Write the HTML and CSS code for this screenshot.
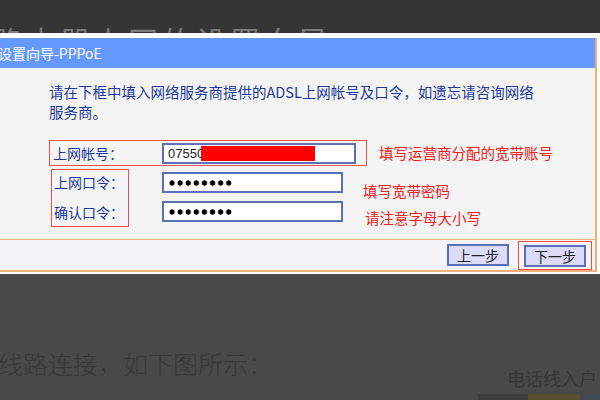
FILE: index.html
```html
<!DOCTYPE html>
<html lang="zh-CN">
<head>
    <meta charset="UTF-8">
    <title>设置向导-PPPoE</title>
    <link rel="stylesheet" href="styles.css">
</head>
<body>
<div class="page">
    <div class="heading">
        <h2>路由器上网的设置向导</h2>
    </div>

    <div class="shot">
        <div class="win">
            <div class="win__title">设置向导-PPPoE</div>

            <div class="win__body">
                <p class="intro">请在下框中填入网络服务商提供的ADSL上网帐号及口令，如遗忘请咨询网络服务商。</p>

                <div class="row">
                    <div class="mark mark--account">
                        <span class="label">上网帐号：</span>
                        <span class="field field--wide">07550<span class="redact"></span></span>
                    </div>
                    <span class="note note--first">填写运营商分配的宽带账号</span>
                </div>

                <div class="row row--group">
                    <div class="mark mark--labels">
                        <span class="label">上网口令：</span>
                        <span class="label">确认口令：</span>
                    </div>
                    <div class="fields">
                        <div class="fields__line">
                            <span class="field"><span class="dots"></span></span>
                            <span class="note note--second">填写宽带密码</span>
                        </div>
                        <div class="fields__line">
                            <span class="field"><span class="dots"></span></span>
                            <span class="note note--third">请注意字母大小写</span>
                        </div>
                    </div>
                </div>
            </div>

            <div class="win__foot">
                <button class="btn">上一步</button>
                <div class="mark mark--btn">
                    <button class="btn">下一步</button>
                </div>
            </div>
        </div>
    </div>

    <div class="lower">
        <p class="lower__text">线路连接，如下图所示：</p>
        <div class="lower__figure">
            <span class="lower__caption">电话线入户</span>
            <div class="lower__bar">
                <span class="seg seg--grey"></span>
                <span class="seg seg--yellow"></span>
                <span class="seg seg--blue"></span>
            </div>
        </div>
    </div>
</div>
</body>
</html>
```

FILE: styles.css
```css
body {
  margin: 0;
  background: #494949;
  font-family: "Noto Sans CJK SC", "Noto Sans", sans-serif;
}

.page {
  width: 600px;
  height: 400px;
  overflow: hidden;
}

/* page heading, mostly hidden under the screenshot */
.heading {
  height: 33px;
  background: #353535;
  overflow: hidden;
}

.heading h2 {
  margin: 25px 0 0 -8px;
  font-size: 30px;
  font-weight: 400;
  line-height: 30px;
  letter-spacing: 4px;
  color: #7a7a7a;
  white-space: nowrap;
}

/* the router screenshot */
.shot {
  background: #fff;
  padding: 5px 3px 2px 0;
}

.win {
  border-right: 2px solid #f2ad6a;
  border-bottom: 2px solid #f0b27a;
}

.win__title {
  height: 30px;
  line-height: 30px;
  background: #6699ff;
  color: #fff;
  font-size: 14px;
  text-indent: -2px;
}

.win__body {
  height: 172px;
  background: #f4f4f4;
  border-bottom: 1px solid #f3b47a;
  padding-top: 14px;
  box-sizing: border-box;
}

.intro {
  margin: 0 0 18px 49px;
  width: 490px;
  font-size: 14.5px;
  line-height: 20px;
  color: #1d3a9a;
}

.row {
  display: flex;
  align-items: center;
}

.mark {
  border: 1px solid #e85050;
  box-sizing: border-box;
}

.mark--account {
  display: flex;
  align-items: center;
  margin-left: 49px;
  width: 318px;
  height: 26px;
  padding-left: 3px;
}

.label {
  font-size: 14px;
  color: #1d3a9a;
  line-height: 22px;
}

.mark--account .label {
  width: 109px;
}

.field {
  display: flex;
  align-items: center;
  width: 181px;
  height: 21px;
  box-sizing: border-box;
  background: #fff;
  border: 2px solid #5b6fb8;
  padding-left: 4px;
}

.field--wide {
  width: 194px;
  font-family: "Liberation Sans", sans-serif;
  font-size: 13px;
  color: #222;
}

.redact {
  display: inline-block;
  width: 114px;
  height: 15px;
  background: #ff0000;
  margin-left: -3px;
}

.dots {
  display: inline-block;
  width: 65px;
  height: 6px;
  background: radial-gradient(circle, #000 2.4px, transparent 2.9px) 0 0 / 8.1px 6px repeat-x;
}

.note {
  font-size: 14.5px;
  color: #ee2020;
  line-height: 20px;
}

.note--first {
  margin-left: 12px;
}

.note--second {
  margin: 9px 0 0 20px;
}

.note--third {
  margin: 7px 0 0 22px;
}

.row--group {
  align-items: flex-start;
  margin-top: 3px;
}

.mark--labels {
  display: flex;
  flex-direction: column;
  gap: 8px;
  margin-left: 51px;
  width: 78px;
  height: 58px;
  padding: 1px 0 0 2px;
}

.fields {
  margin-left: 33px;
  padding-top: 3px;
}

.fields__line {
  display: flex;
  align-items: flex-start;
  height: 29px;
}

.win__foot {
  height: 30px;
  background: #f5f4f8;
  display: flex;
  justify-content: flex-end;
  align-items: center;
  padding-right: 3px;
}

.btn {
  width: 62px;
  height: 22px;
  padding: 0;
  background: #dcdcfa;
  border: 2px solid #5b6fb8;
  font-family: "Noto Sans CJK SC", sans-serif;
  font-size: 14px;
  line-height: 18px;
  color: #222;
}

.mark--btn {
  margin-left: 9px;
  padding: 1px 5px 2px;
}

/* article text below the screenshot */
.lower {
  display: flex;
  justify-content: space-between;
}

.lower__text {
  margin: 74px 0 0 -2px;
  font-size: 25px;
  font-weight: 300;
  line-height: 30px;
  color: #3a3a3a;
}

.lower__figure {
  width: 122px;
  margin-top: 94px;
}

.lower__caption {
  display: block;
  padding-left: 29px;
  font-size: 18px;
  line-height: 20px;
  color: #383838;
  white-space: nowrap;
}

.lower__bar {
  display: flex;
  height: 6px;
  margin-top: 6px;
}

.seg {
  height: 6px;
}

.seg--grey {
  width: 50px;
  background: #3d3d3d;
}

.seg--yellow {
  width: 52px;
  background: #5a5030;
}

.seg--blue {
  width: 20px;
  background: #3f4a55;
}
```
